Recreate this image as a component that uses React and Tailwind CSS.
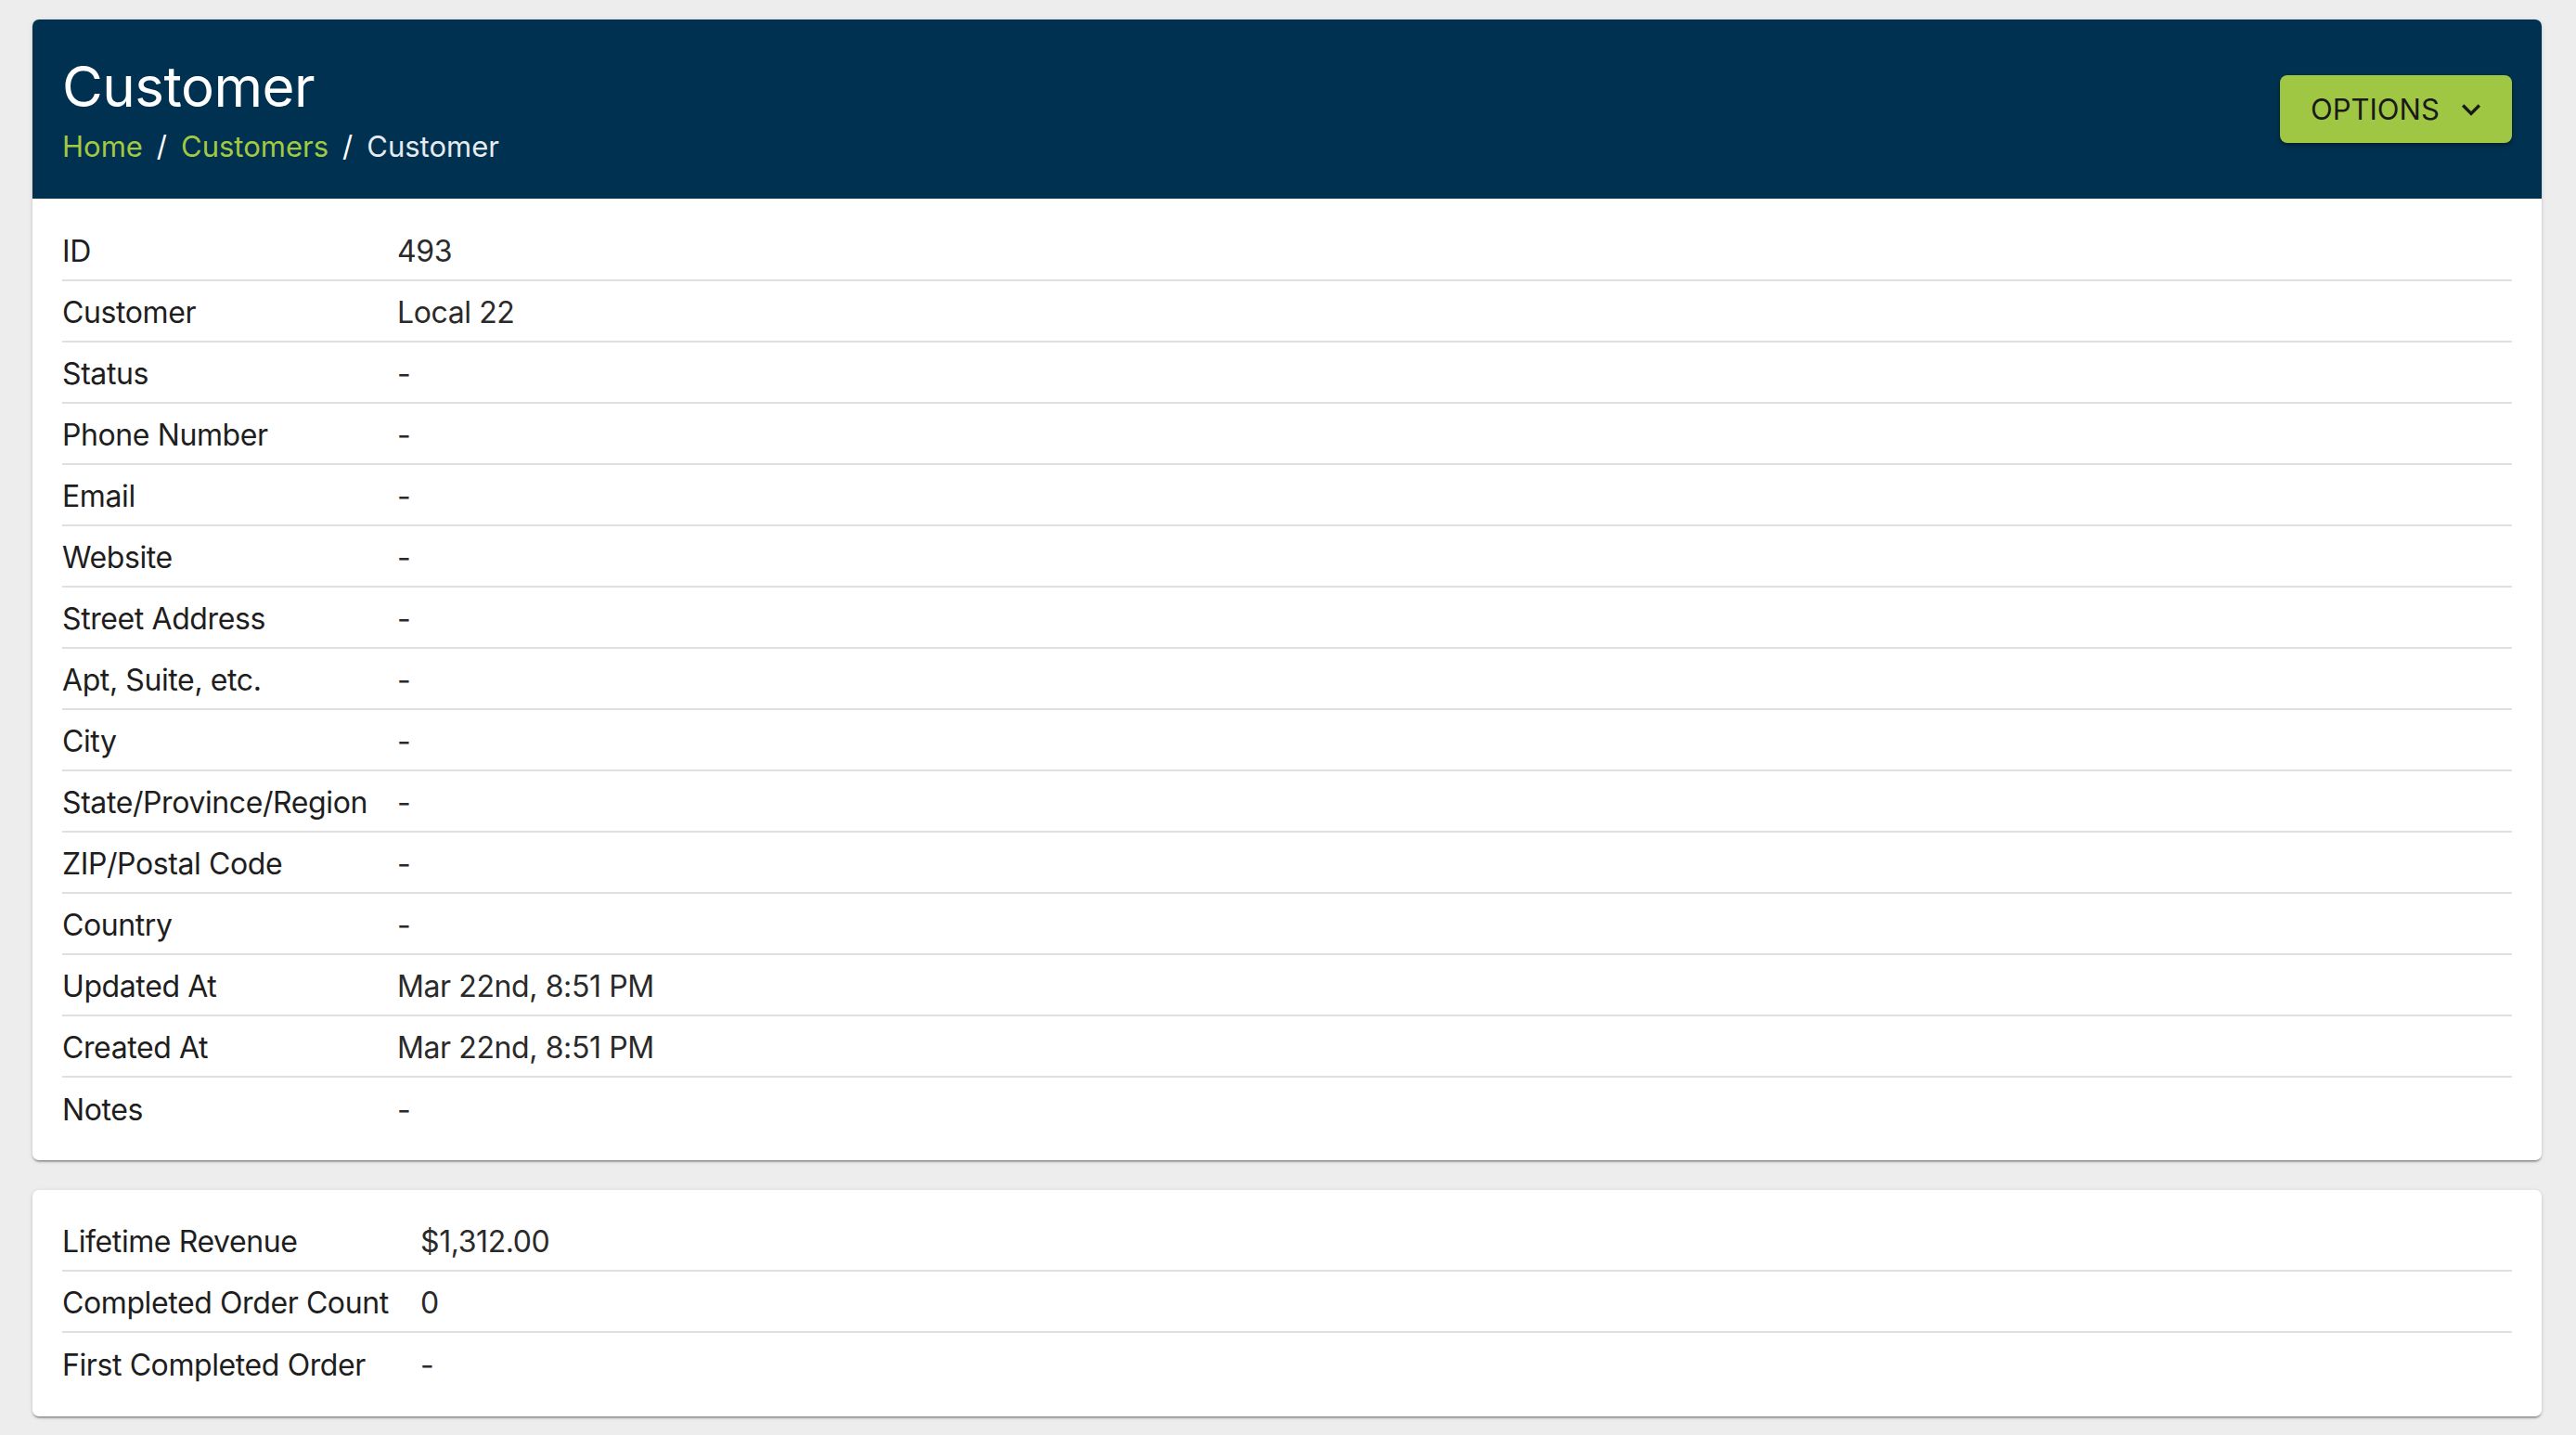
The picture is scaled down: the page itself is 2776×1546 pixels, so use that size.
import React from "react";

const rows1 = [
  ["ID", "493"],
  ["Customer", "Local 22"],
  ["Status", "-"],
  ["Phone Number", "-"],
  ["Email", "-"],
  ["Website", "-"],
  ["Street Address", "-"],
  ["Apt, Suite, etc.", "-"],
  ["City", "-"],
  ["State/Province/Region", "-"],
  ["ZIP/Postal Code", "-"],
  ["Country", "-"],
  ["Updated At", "Mar 22nd, 8:51 PM"],
  ["Created At", "Mar 22nd, 8:51 PM"],
  ["Notes", "-"],
];

const rows2 = [
  ["Lifetime Revenue", "$1,312.00"],
  ["Completed Order Count", "0"],
  ["First Completed Order", "-"],
];

function Rows({ rows, labelWidth }) {
  return (
    <div className="flex flex-col tracking-[-0.4px]">
      {rows.map(([label, value], i) => (
        <div
          key={label}
          className={
            "flex h-[66px] items-center pt-[4px] " +
            (i < rows.length - 1 ? "border-b-2 border-[#e0e0e0]" : "")
          }
        >
          <div className="shrink-0 text-[#1e1e1e]" style={{ width: labelWidth }}>
            {label}
          </div>
          <div className="text-[#2a2a2a]">{value}</div>
        </div>
      ))}
    </div>
  );
}

const cardShadow =
  "shadow-[0_3px_2px_-2px_rgba(0,0,0,0.35),0_2px_2px_0_rgba(0,0,0,0.14),0_1px_5px_0_rgba(0,0,0,0.12)]";

export default function App() {
  return (
    <div
      className="min-h-screen bg-[#ededed] pl-[35px] pr-[37px] pt-[21px] pb-[20px] text-[32px] leading-none"
      style={{ fontFamily: "Inter, Roboto, 'Liberation Sans', sans-serif" }}
    >
      <div className={"overflow-hidden rounded-[7px] bg-white " + cardShadow}>
        <div className="flex h-[193px] items-center justify-between bg-[#003151] px-[32px]">
          <div className="flex flex-col">
            <h1 className="text-[60px] leading-[72px] font-normal text-white tracking-[-0.5px]">
              Customer
            </h1>
            <div className="mt-[9px] flex items-center text-[31px] leading-[40px]">
              <span className="text-[#a3c940]">Home</span>
              <span className="px-[15px] text-white">/</span>
              <span className="text-[#a3c940]">Customers</span>
              <span className="px-[15px] text-white">/</span>
              <span className="text-[#e6ebef]">Customer</span>
            </div>
          </div>
          <button className="flex h-[73px] w-[250px] items-center justify-between rounded-[8px] bg-[#9fc744] pl-[33px] pr-[24px] text-[31px] text-[#1a1a1a] shadow-[0_3px_5px_rgba(0,0,0,0.35)]">
            <span>OPTIONS</span>
            <svg width="40" height="40" viewBox="0 0 24 24" fill="#1a1a1a">
              <path d="M16.59 8.59 12 13.17 7.41 8.59 6 10l6 6 6-6z" />
            </svg>
          </button>
        </div>
        <div className="px-[32px] pt-[23px] pb-[23px]">
          <Rows rows={rows1} labelWidth={361} />
        </div>
      </div>

      <div className={"mt-[32px] rounded-[7px] bg-white px-[32px] pt-[22px] pb-[24px] " + cardShadow}>
        <Rows rows={rows2} labelWidth={386} />
      </div>
    </div>
  );
}
